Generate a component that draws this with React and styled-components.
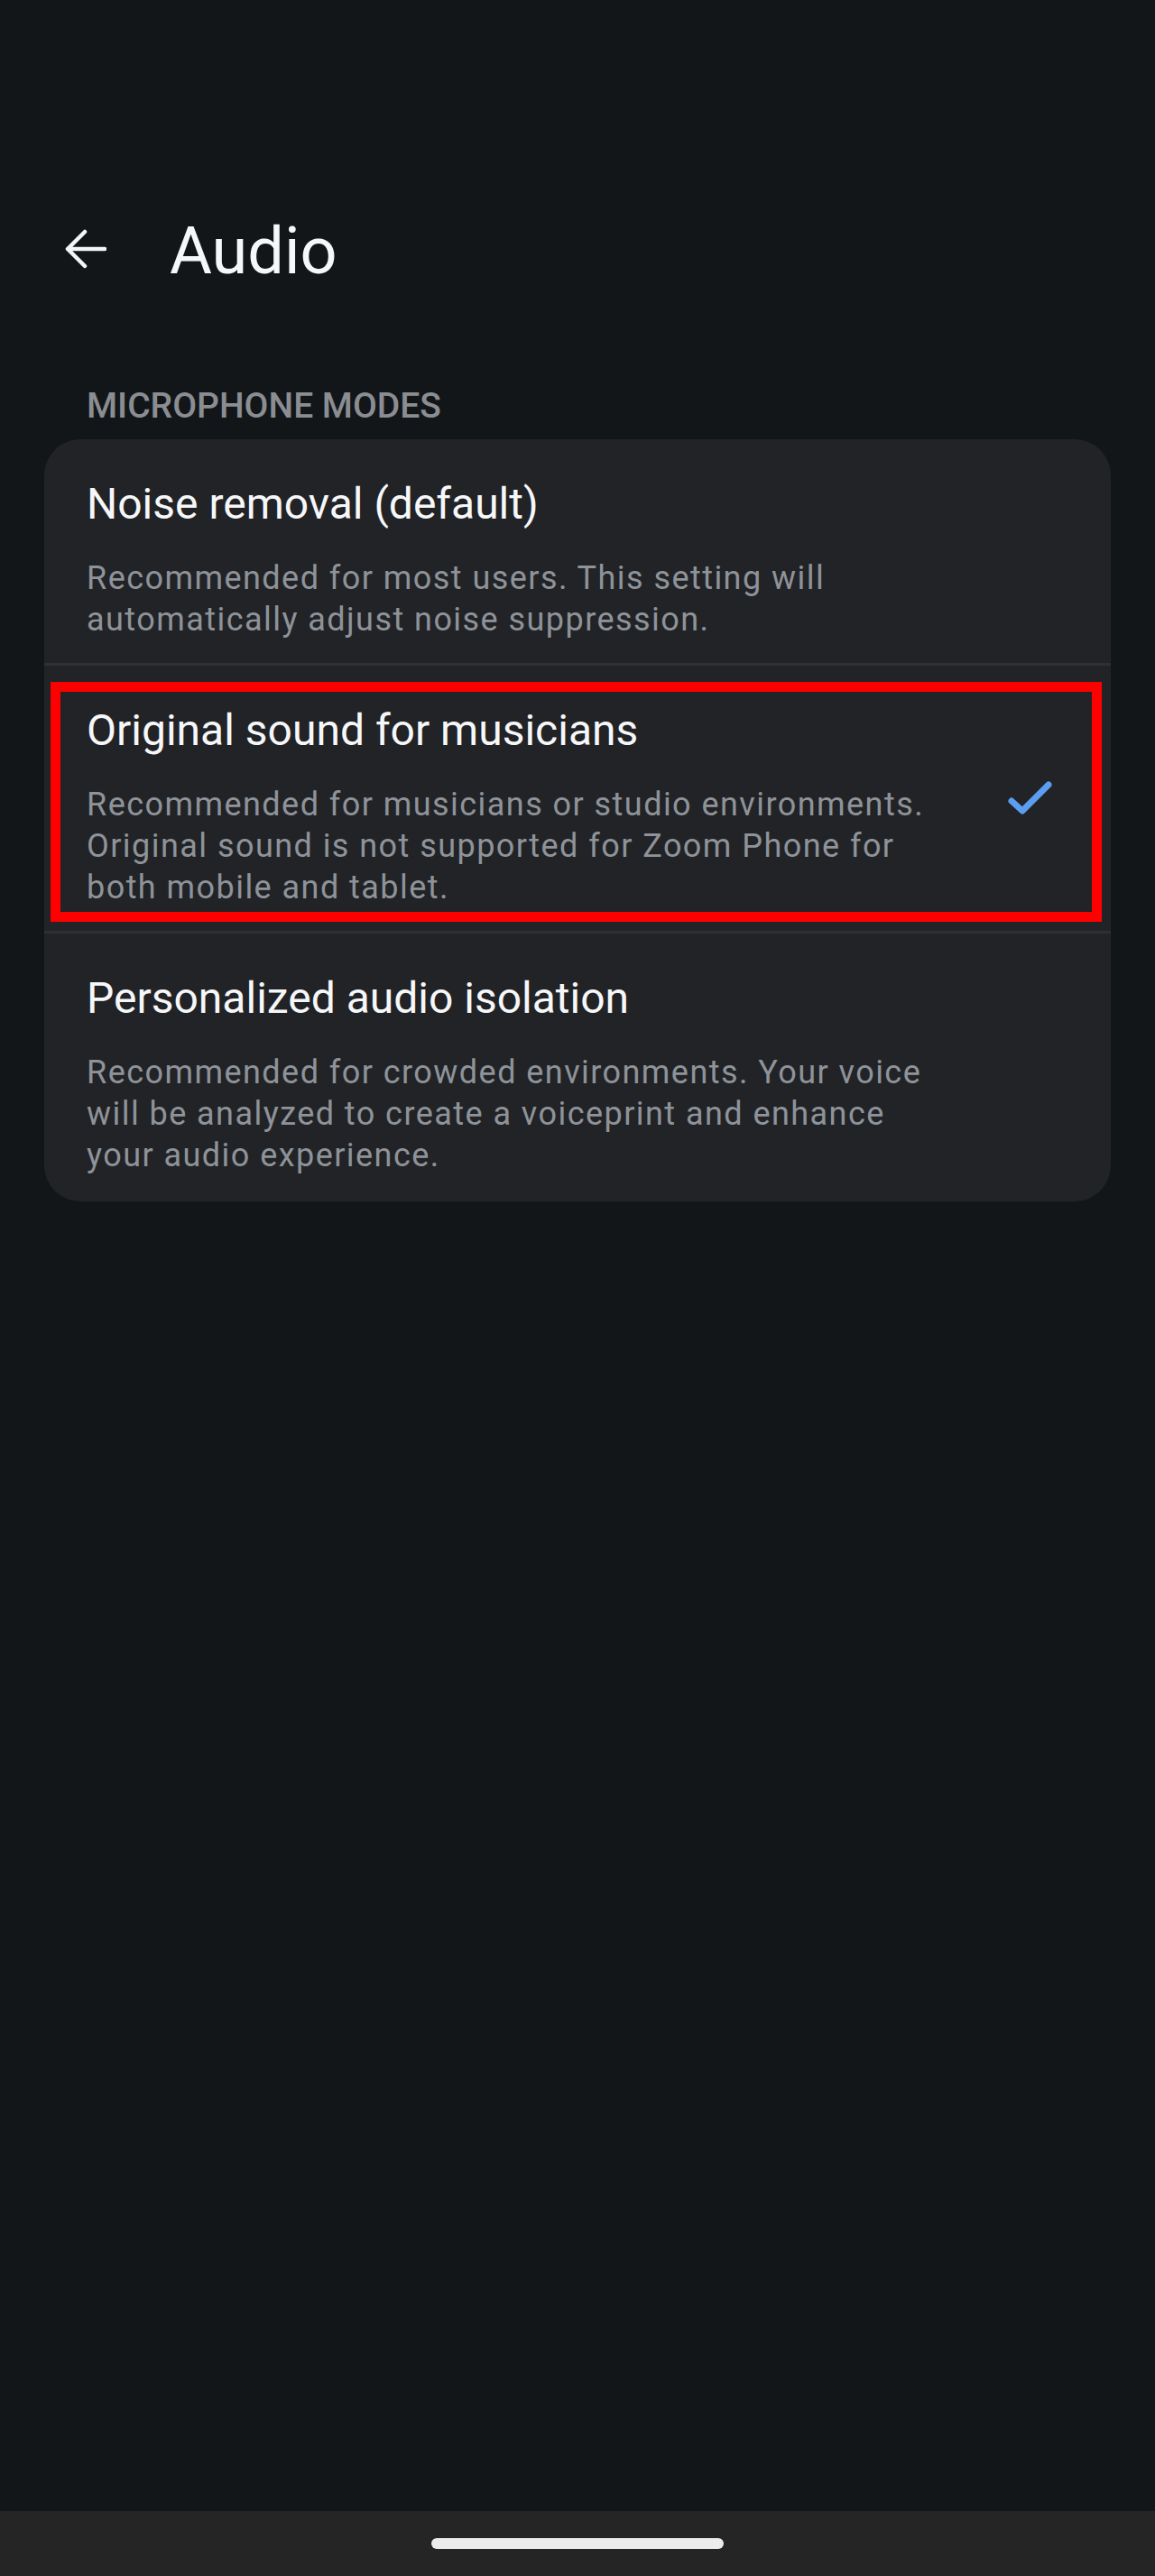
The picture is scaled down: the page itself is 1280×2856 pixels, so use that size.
import React from 'react'
import styled, { createGlobalStyle } from 'styled-components'

const GlobalStyle = createGlobalStyle`
	html, body {
		margin: 0;
		padding: 0;
		background: #131619;
	}
	body {
		font-family: Roboto, 'Noto Sans', 'Liberation Sans', sans-serif;
		-webkit-font-smoothing: antialiased;
	}
`

const modes = [
	{
		title: 'Noise removal (default)',
		desc: 'Recommended for most users. This setting will automatically adjust noise suppression.',
	},
	{
		title: 'Original sound for musicians',
		desc: 'Recommended for musicians or studio environments. Original sound is not supported for Zoom Phone for both mobile and tablet.',
		checked: true,
		highlighted: true,
	},
	{
		title: 'Personalized audio isolation',
		desc: 'Recommended for crowded environments. Your voice will be analyzed to create a voiceprint and enhance your audio experience.',
	},
]

function BackArrow() {
	return (
		<svg width="48" height="48" viewBox="0 0 48 48" fill="none">
			<path
				d="M5 24 H46 M24 5 L5 24 L24 43"
				stroke="#f4f5f7"
				strokeWidth="4.5"
				strokeLinecap="round"
				strokeLinejoin="round"
			/>
		</svg>
	)
}

function Check() {
	return (
		<svg width="52" height="40" viewBox="0 0 52 40" fill="none">
			<path
				d="M6 23 L18 34 L47 5"
				stroke="#5b9df0"
				strokeWidth="7"
				strokeLinecap="round"
				strokeLinejoin="round"
			/>
		</svg>
	)
}

export default function App() {
	return (
		<Screen>
			<GlobalStyle />
			<Main>
				<Header>
					<BackButton>
						<BackArrow />
					</BackButton>
					<Title>Audio</Title>
				</Header>

				<SectionLabel>MICROPHONE MODES</SectionLabel>

				<Card>
					{modes.map((m) => (
						<Row key={m.title} highlighted={m.highlighted}>
							<TextCol>
								<RowTitle>{m.title}</RowTitle>
								<RowDesc>{m.desc}</RowDesc>
							</TextCol>
							<CheckSlot>{m.checked && <Check />}</CheckSlot>
						</Row>
					))}
				</Card>
			</Main>
			<NavBar>
				<Handle />
			</NavBar>
		</Screen>
	)
}

const Screen = styled.div`
	display: flex;
	flex-direction: column;
	min-height: 100vh;
	background: #131619;
`

const Main = styled.main`
	flex: 1;
	display: flex;
	flex-direction: column;
`

const Header = styled.header`
	display: flex;
	align-items: center;
	gap: 70px;
	padding: 237px 0 0 70px;
	height: 84px;
`

const BackButton = styled.div`
	display: flex;
	width: 48px;
	height: 48px;
	margin-top: -6px;
`

const Title = styled.h1`
	margin: 0;
	font-size: 72px;
	line-height: 84px;
	font-weight: 400;
	color: #f6f7f9;
`

const SectionLabel = styled.div`
	margin: 106px 0 14px 96px;
	font-size: 39px;
	line-height: 46px;
	font-weight: 500;
	color: #8a8d91;
`

const Card = styled.section`
	margin: 0 49px;
	background: #222326;
	border-radius: 40px;
	overflow: hidden;
`

const Row = styled.div`
	position: relative;
	display: flex;
	align-items: center;
	padding: 44px 0 25px 47px;

	& + & {
		border-top: 3px solid #2e3034;
		padding-top: 44px;
	}

	&:last-child {
		padding-bottom: 28px;
	}

	${(p) =>
		p.highlighted &&
		`
		&::after {
			content: '';
			position: absolute;
			top: 18px;
			left: 7px;
			right: 10px;
			bottom: 10px;
			border: 11px solid #ff0000;
			pointer-events: none;
		}
	`}
`

const TextCol = styled.div`
	display: flex;
	flex-direction: column;
	gap: 31px;
	width: 950px;
`

const RowTitle = styled.div`
	font-size: 48px;
	line-height: 56px;
	color: #f6f7f9;
`

const RowDesc = styled.div`
	font-size: 36px;
	line-height: 46px;
	letter-spacing: 1.45px;
	color: #8e939a;
`

const CheckSlot = styled.div`
	flex: 1;
	display: flex;
	justify-content: flex-end;
	padding-right: 64px;
	margin-bottom: 20px;
`

const NavBar = styled.div`
	height: 72px;
	background: #252525;
	display: flex;
	justify-content: center;
	padding-top: 30px;
	box-sizing: border-box;
`

const Handle = styled.div`
	width: 324px;
	height: 12px;
	border-radius: 6px;
	background: #ececec;
`
